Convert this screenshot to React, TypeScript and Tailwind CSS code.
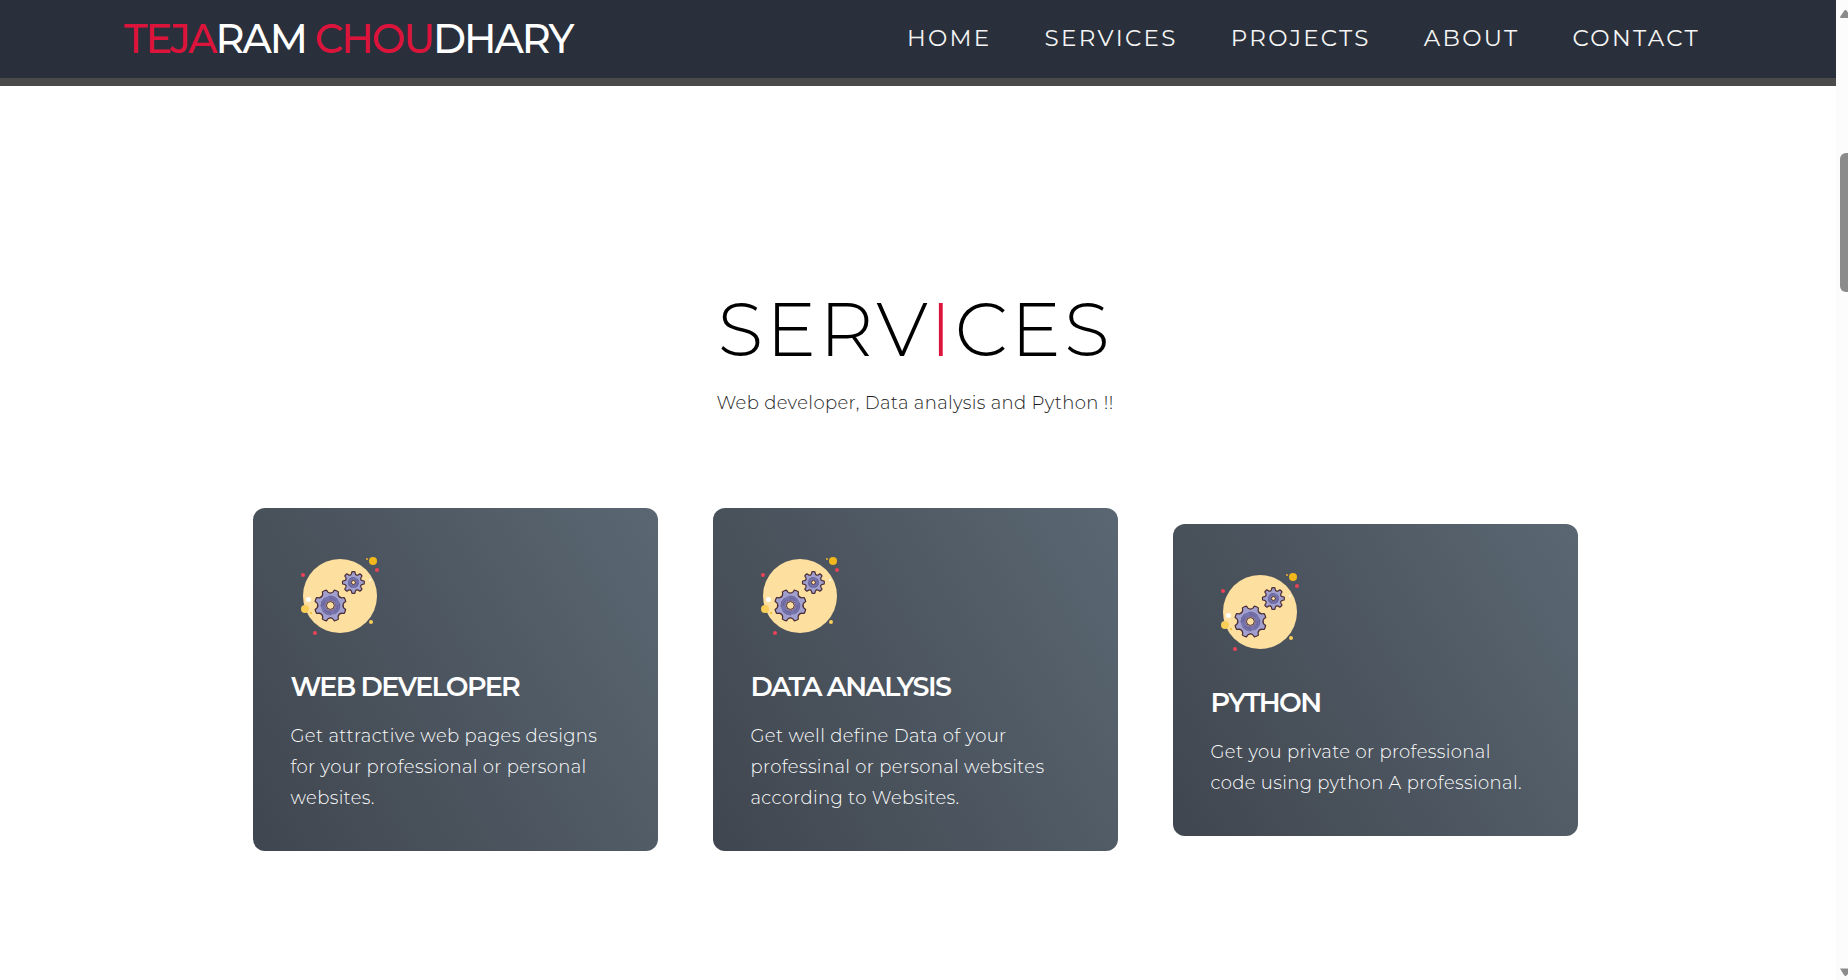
const navItems = ["Home", "Services", "Projects", "About", "Contact"];

const services = [
  {
    title: "Web Developer",
    text: "Get attractive web pages designs for your professional or personal websites.",
  },
  {
    title: "Data Analysis",
    text: "Get well define Data of your professinal or personal websites according to Websites.",
  },
  {
    title: "Python",
    text: "Get you private or professional code using python A professional.",
  },
];

/** Outline of an eight-toothed gear around (cx, cy); `turn` is in degrees. */
function gearPath(cx: number, cy: number, outer: number, inner: number, turn: number) {
  const at = (deg: number, r: number) => {
    const a = (deg * Math.PI) / 180;
    return `${(cx + r * Math.sin(a)).toFixed(2)} ${(cy - r * Math.cos(a)).toFixed(2)}`;
  };
  const parts: string[] = [];
  for (let i = 0; i < 8; i++) {
    const c = turn + i * 45;
    parts.push(`${i === 0 ? "M" : "L"}${at(c - 8, outer)}`);
    parts.push(`Q${at(c, outer + 0.4)} ${at(c + 8, outer)}`);
    parts.push(`L${at(c + 12, inner + 0.8)}`);
    parts.push(`Q${at(c + 22.5, inner - 1.2)} ${at(c + 33, inner + 0.8)}`);
  }
  return parts.join(" ") + "Z";
}

function GearsIcon() {
  return (
    <svg viewBox="1 0 100 100" className="size-[100px]" aria-hidden="true">
      <circle cx="50" cy="50" r="37" fill="#fddf9f" />
      <g stroke="#4a2c35" strokeWidth="1.2" strokeLinejoin="round">
        <path d={gearPath(40.4, 59.5, 15.8, 12.8, 22.5)} fill="#a09fcd" />
        <path d={gearPath(63.4, 36.5, 10.8, 8.3, 0)} fill="#a09fcd" />
      </g>
      <circle cx="40.4" cy="59.5" r="7.6" fill="none" stroke="#7775ae" strokeWidth="4" />
      <circle cx="40.4" cy="59.5" r="9.4" fill="none" stroke="#5d5288" strokeWidth="0.6" strokeDasharray="10 4" />
      <circle cx="40.4" cy="59.5" r="7.2" fill="none" stroke="#5d5288" strokeWidth="0.6" strokeDasharray="7 4" />
      <circle cx="40.4" cy="59.5" r="5.2" fill="#b3a3b9" stroke="#62507c" strokeWidth="0.7" />
      <circle cx="40.4" cy="59.5" r="3.9" fill="#fddf9f" stroke="#4a2c35" strokeWidth="1" />
      <circle cx="63.4" cy="36.5" r="4" fill="none" stroke="#7371aa" strokeWidth="3.2" />
      <circle cx="63.4" cy="36.5" r="5" fill="none" stroke="#5d5288" strokeWidth="0.5" strokeDasharray="6 3" />
      <circle cx="63.4" cy="36.5" r="2" fill="#fddf9f" stroke="#4a2c35" strokeWidth="1" />
      <g fill="#f1b71c">
        <circle cx="83" cy="15" r="4" />
        <circle cx="77" cy="13" r="1" />
        <circle cx="21" cy="67" r="1" />
      </g>
      <g fill="#ea4258">
        <circle cx="87" cy="24" r="2" />
        <circle cx="13" cy="29" r="2" />
        <circle cx="25" cy="87" r="2" />
      </g>
      <g fill="#fbcd59">
        <circle cx="15" cy="63" r="4" />
        <circle cx="81" cy="76" r="2" />
      </g>
      <g fill="#ffffff">
        <circle cx="18.5" cy="53.5" r="2.5" />
        <circle cx="80" cy="34" r="1" />
      </g>
    </svg>
  );
}

function Header() {
  return (
    <header className="border-b-8 border-[#4a4a4a] bg-[#29303b]">
      <div className="flex h-[78px] items-center justify-between pr-[136px] pl-[124px]">
        <a href="#home" className="text-[40px] leading-none font-medium tracking-tighter text-white uppercase">
          <span className="text-[#dc143c]">Teja</span>ram <span className="text-[#dc143c]">Chou</span>dhary
        </a>
        <nav className="pb-0.5">
          <ul className="flex gap-[53px]">
            {navItems.map((item) => (
              <li key={item}>
                <a href={`#${item.toLowerCase()}`} className="text-[23px] tracking-widest text-[#f5f5f5] uppercase">
                  {item}
                </a>
              </li>
            ))}
          </ul>
        </nav>
      </div>
    </header>
  );
}

function Scrollbar() {
  return (
    <div className="flex w-3 shrink-0 flex-col items-end overflow-hidden bg-[#fcfcfc]" aria-hidden="true">
      <svg viewBox="0 0 8 8" className="mt-[10px] h-2 w-2">
        <path d="M0 7 L4 1 Q5.5 -1 7 1 L11 8 L0.5 8Z" fill="#8b8b8b" />
      </svg>
      <div className="mt-[135px] h-[139px] w-2 rounded-l-md bg-[#8b8b8b]" />
      <svg viewBox="0 0 8 12" className="mt-auto h-3 w-2">
        <path d="M0 0.5 H11 L7 7 Q5.5 9 4 7Z" fill="#8b8b8b" />
      </svg>
    </div>
  );
}

export default function App() {
  return (
    <div className="flex min-h-screen bg-white font-['Montserrat','Inter',sans-serif]">
      <div className="min-w-0 flex-1">
        <Header />
        <main className="pt-[195px] pr-1.5 pb-32">
          <section id="services" className="mx-auto max-w-[1325px]">
            <div className="text-center">
              <h1 className="text-[75px] leading-24 font-light tracking-[3px] text-black uppercase">
                Serv<span className="text-[#dc143c]">i</span>ces
              </h1>
              <p className="mt-[11px] text-lg leading-[31px] font-light tracking-[0.02em] text-[#1c1c1c]">
                Web developer, Data analysis and Python !!
              </p>
            </div>
            <div className="mt-[89px] grid grid-cols-3 items-center gap-[55px]">
              {services.map((service) => (
                <article
                  key={service.title}
                  className="rounded-xl bg-linear-60 from-[#40464f] to-[#5a6772] px-[38px] pt-[38px] pb-[37px] text-white"
                >
                  <GearsIcon />
                  <h2 className="mt-[21px] text-[27px] leading-10 font-semibold tracking-[-0.06em] uppercase">
                    {service.title}
                  </h2>
                  <p className="mt-[14px] text-lg leading-[31px] font-light tracking-[0.02em]">{service.text}</p>
                </article>
              ))}
            </div>
          </section>
        </main>
      </div>
      <Scrollbar />
    </div>
  );
}
